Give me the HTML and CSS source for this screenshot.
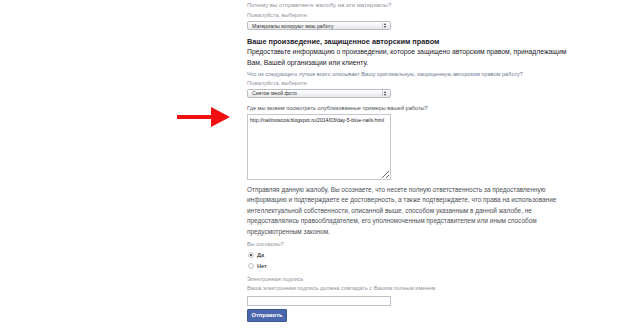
FILE: index.html
```html
<!DOCTYPE html>
<html lang="ru">
<head>
<meta charset="utf-8">
<title>Жалоба</title>
<link rel="stylesheet" href="styles.css">
</head>
<body>
<div class="page">
  <form class="form">
    <div class="label l1">Почему вы отправляете жалобу на эти материалы?</div>
    <div class="label">Пожалуйста, выберите:</div>
    <div class="select"><span>Материалы копируют мою работу</span><i class="arr"></i></div>

    <div class="heading">Ваше произведение, защищенное авторским правом</div>
    <div class="intro">Предоставьте информацию о произведении, которое защищено авторским правом, принадлежащим Вам, Вашей организации или клиенту.</div>

    <div class="label q">Что из следующего лучше всего описывает Вашу оригинальную, защищенную авторским правом работу?</div>
    <div class="label tight">Пожалуйста, выберите:</div>
    <div class="select"><span>Снятое мной фото</span><i class="arr"></i></div>

    <div class="label dark where">Где мы можем посмотреть опубликованные примеры вашей работы?</div>
    <textarea class="ta" readonly>http://nailmoscow.blogspot.ru/2014/03/day-5-blue-nails.html</textarea>

    <p class="terms">Отправляя данную жалобу, Вы осознаете, что несете полную ответственность за предоставленную информацию и подтверждаете ее достоверность, а также подтверждаете, что права на использование интеллектуальной собственности, описанной выше, способом указанным в данной жалобе, не предоставлялись правообладателем, его уполномоченным представителем или иным способом предусмотренным законом.</p>

    <div class="label agree">Вы согласны?</div>
    <div class="radio"><span class="dot on"></span><span class="rl">Да</span></div>
    <div class="radio"><span class="dot"></span><span class="rl">Нет</span></div>

    <div class="label sig">Электронная подпись</div>
    <div class="label tight">Ваша электронная подпись должна совпадать с Вашим полным именем</div>
    <div class="input"></div>
    <button type="button" class="btn">Отправить</button>
  </form>
  <svg class="arrow" width="56" height="22" viewBox="0 0 56 22">
    <rect x="0" y="8" width="36" height="4" fill="#f01010"/>
    <polygon points="34,0 53,10 34,20" fill="#f01010"/>
  </svg>
</div>
</body>
</html>
```
FILE: styles.css
```css
html, body {
  margin: 0;
  padding: 0;
  background: #fff;
}
body {
  font-family: "Liberation Sans", Arial, Helvetica, sans-serif;
  color: #4b4f56;
}
.page {
  position: relative;
  width: 640px;
  height: 329px;
  overflow: hidden;
}
.form {
  display: flex;
  flex-direction: column;
  align-items: flex-start;
  margin-left: 247px;
  width: 360px;
}
.label {
  font-size: 5.6px;
  line-height: 10px;
  color: #90949c;
  white-space: nowrap;
}
.label.l1 { font-size: 6px; }
.label.tight { line-height: 9px; }
.label.q {
  color: #6d7b95;
  line-height: 9px;
  margin-top: 1.5px;
}
.label.dark { color: #4b4f56; }
.where { margin-top: 5.5px; }
.select {
  box-sizing: border-box;
  width: 144px;
  height: 9px;
  margin-top: 1px;
  border: 1px solid #b9bcc2;
  border-radius: 2px;
  background: linear-gradient(#ffffff, #e6e7ea);
  display: flex;
  align-items: center;
  justify-content: space-between;
  padding: 0 2px 0 4px;
  font-size: 5.2px;
  color: #333;
}
.arr {
  position: relative;
  width: 5px;
  height: 6px;
  border-left: 1px solid #c8cacf;
}
.arr::before, .arr::after {
  content: "";
  position: absolute;
  left: 1px;
  border-left: 1.5px solid transparent;
  border-right: 1.5px solid transparent;
}
.arr::before { top: 0.5px; border-bottom: 2px solid #333; }
.arr::after { bottom: 0.5px; border-top: 2px solid #333; }
.heading {
  margin-top: 7px;
  font-size: 7.3px;
  font-weight: bold;
  line-height: 10px;
  color: #1d2129;
  white-space: nowrap;
}
.intro {
  width: 336px;
  font-size: 6.8px;
  line-height: 10.5px;
  color: #1d2129;
}
.ta {
  box-sizing: border-box;
  width: 144px;
  height: 66px;
  margin: 1px 0 0 0;
  padding: 2px 2px;
  border: 1px solid #c4c7cc;
  border-radius: 0;
  font-family: "Liberation Sans", Arial, sans-serif;
  font-size: 5.1px;
  line-height: 7px;
  color: #1d2129;
  resize: both;
  outline: none;
  overflow: hidden;
}
.terms {
  margin: 5px 0 0 0;
  width: 330px;
  font-size: 6.45px;
  line-height: 10.4px;
  color: #4b4f56;
}
.agree { margin-top: 2px; }
.radio {
  display: flex;
  align-items: center;
  height: 11px;
  gap: 3px;
  padding-left: 1px;
}
.dot {
  box-sizing: border-box;
  width: 6px;
  height: 6px;
  border-radius: 50%;
  border: 1px solid #c4c7cc;
  background: linear-gradient(#fff, #eceef1);
  display: flex;
  align-items: center;
  justify-content: center;
}
.dot.on::after {
  content: "";
  width: 2px;
  height: 2px;
  border-radius: 50%;
  background: #1d2129;
}
.rl {
  font-size: 5.6px;
  font-weight: 600;
  color: #4b4f56;
}
.sig { margin-top: 3px; }
.input {
  box-sizing: border-box;
  width: 144px;
  height: 10px;
  margin-top: 2.5px;
  border: 1px solid #bdc1c9;
  background: #fff;
}
.btn {
  margin-top: 3px;
  box-sizing: border-box;
  width: 40px;
  height: 13px;
  padding: 0;
  border: 1px solid #3a5795;
  background: #4a66ad;
  color: #fff;
  font-family: "Liberation Sans", Arial, sans-serif;
  font-size: 5.8px;
  font-weight: bold;
  border-radius: 1px;
}
.arrow {
  position: absolute;
  left: 177px;
  top: 107px;
}
```
